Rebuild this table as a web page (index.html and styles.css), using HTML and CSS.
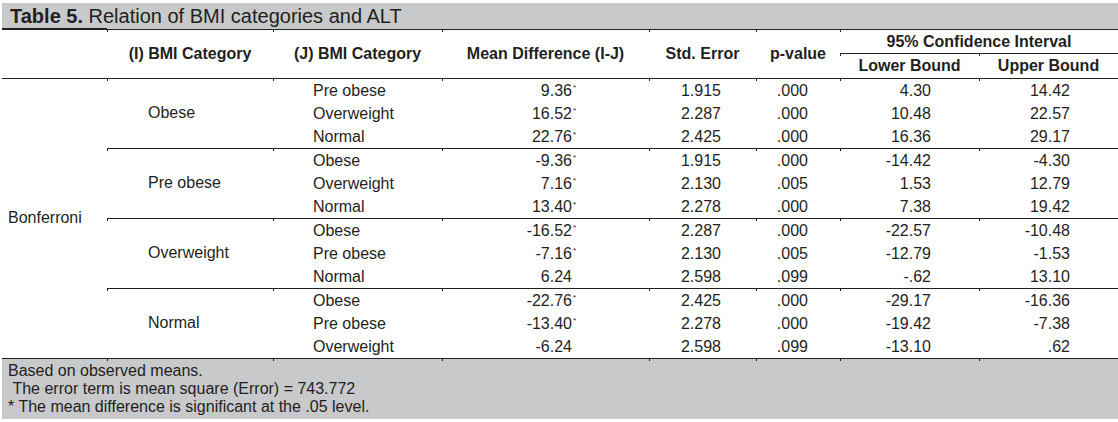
FILE: index.html
```html
<!DOCTYPE html>
<html lang="en">
<head>
<meta charset="utf-8">
<title>Table 5. Relation of BMI categories and ALT</title>
<link rel="stylesheet" href="styles.css">
</head>
<body>
<div class="sheet">
  <div class="title"><b>Table 5.</b> Relation of BMI categories and ALT</div>
  <div class="grid">
    <div class="h span2r end"></div>
    <div class="h span2r end tk">(I) BMI Category</div>
    <div class="h span2r end tk">(J) BMI Category</div>
    <div class="h span2r end tk">Mean Difference (I-J)</div>
    <div class="h span2r end tk">Std. Error</div>
    <div class="h span2r end tk">p-value</div>
    <div class="h span2c end tk">95% Confidence Interval</div>
    <div class="h end tk">Lower Bound</div>
    <div class="h end tk">Upper Bound</div>

    <div class="method end">Bonferroni</div>

    <div class="gi end tk">Obese</div>
    <div class="j tk">Pre obese</div><div class="md tk">9.36<sup class="s">*</sup></div><div class="se tk">1.915</div><div class="p tk">.000</div><div class="lo tk">4.30</div><div class="up tk">14.42</div>
    <div class="j">Overweight</div><div class="md">16.52<sup class="s">*</sup></div><div class="se">2.287</div><div class="p">.000</div><div class="lo">10.48</div><div class="up">22.57</div>
    <div class="j end">Normal</div><div class="md end">22.76<sup class="s">*</sup></div><div class="se end">2.425</div><div class="p end">.000</div><div class="lo end">16.36</div><div class="up end">29.17</div>

    <div class="gi end tk">Pre obese</div>
    <div class="j tk">Obese</div><div class="md tk">-9.36<sup class="s">*</sup></div><div class="se tk">1.915</div><div class="p tk">.000</div><div class="lo tk">-14.42</div><div class="up tk">-4.30</div>
    <div class="j">Overweight</div><div class="md">7.16<sup class="s">*</sup></div><div class="se">2.130</div><div class="p">.005</div><div class="lo">1.53</div><div class="up">12.79</div>
    <div class="j end">Normal</div><div class="md end">13.40<sup class="s">*</sup></div><div class="se end">2.278</div><div class="p end">.000</div><div class="lo end">7.38</div><div class="up end">19.42</div>

    <div class="gi end tk">Overweight</div>
    <div class="j tk">Obese</div><div class="md tk">-16.52<sup class="s">*</sup></div><div class="se tk">2.287</div><div class="p tk">.000</div><div class="lo tk">-22.57</div><div class="up tk">-10.48</div>
    <div class="j">Pre obese</div><div class="md">-7.16<sup class="s">*</sup></div><div class="se">2.130</div><div class="p">.005</div><div class="lo">-12.79</div><div class="up">-1.53</div>
    <div class="j end">Normal</div><div class="md end">6.24<sup class="s"></sup></div><div class="se end">2.598</div><div class="p end">.099</div><div class="lo end">-.62</div><div class="up end">13.10</div>

    <div class="gi end tk">Normal</div>
    <div class="j tk">Obese</div><div class="md tk">-22.76<sup class="s">*</sup></div><div class="se tk">2.425</div><div class="p tk">.000</div><div class="lo tk">-29.17</div><div class="up tk">-16.36</div>
    <div class="j">Pre obese</div><div class="md">-13.40<sup class="s">*</sup></div><div class="se">2.278</div><div class="p">.000</div><div class="lo">-19.42</div><div class="up">-7.38</div>
    <div class="j end">Overweight</div><div class="md end">-6.24<sup class="s"></sup></div><div class="se end">2.598</div><div class="p end">.099</div><div class="lo end">-13.10</div><div class="up end">.62</div>
  </div>
  <div class="foot">
    <div>Based on observed means.</div>
    <div>&nbsp;The error term is mean square (Error) = 743.772</div>
    <div>* The mean difference is significant at the .05 level.</div>
  </div>
</div>
</body>
</html>
```

FILE: styles.css
```css
* { box-sizing: border-box; }

html, body {
  margin: 0;
  padding: 0;
  background: #ffffff;
}

body {
  font-family: "Liberation Sans", Arial, sans-serif;
  font-size: 16px;
  color: #231f20;
}

.sheet {
  width: 1116px;
  margin: 3px 0 0 2px;
}

.title {
  height: 27px;
  padding-left: 8px;
  font-size: 20px;
  line-height: 26px;
  background: linear-gradient(#231f20, #231f20) left bottom / 105px 1px no-repeat, #c8c9cb;
  border-bottom: 1px solid #231f20;
}

.title b { font-weight: bold; }

.grid {
  display: grid;
  grid-template-columns: 105px 166px 169px 207px 107px 84px 139px 139px;
  grid-template-rows: 24px 25px repeat(12, 23.333px);
}

.grid > div {
  display: flex;
  align-items: center;
  white-space: nowrap;
}

.end { border-bottom: 1px solid #231f20; }

.tk {
  background: linear-gradient(#231f20, #231f20) 0 0 / 1px 2px no-repeat;
}

.h {
  font-weight: bold;
  justify-content: center;
}

.span2r { grid-row: span 2; }
.span2c { grid-column: span 2; }

.method {
  grid-row: span 12;
  padding-left: 6px;
}

.gi {
  grid-row: span 3;
  padding-left: 41px;
}

.j { padding-left: 40px; }

.md, .se, .p, .lo, .up { justify-content: flex-end; }

.md { padding-right: 72px; }
.se { padding-right: 35px; }
.p { padding-right: 32px; }
.lo { padding-right: 48px; }
.up { padding-right: 48px; }

.s {
  display: inline-block;
  width: 5px;
  padding-left: 1px;
  font-size: 8px;
  line-height: 8px;
  align-self: flex-start;
  margin-top: 5px;
}

.foot {
  height: 60px;
  padding: 3px 6px 0;
  font-size: 16px;
  line-height: 18px;
  background:
    linear-gradient(#231f20, #231f20) 105px 0 / 1px 2px no-repeat,
    linear-gradient(#231f20, #231f20) 271px 0 / 1px 2px no-repeat,
    linear-gradient(#231f20, #231f20) 440px 0 / 1px 2px no-repeat,
    linear-gradient(#231f20, #231f20) 647px 0 / 1px 2px no-repeat,
    linear-gradient(#231f20, #231f20) 754px 0 / 1px 2px no-repeat,
    linear-gradient(#231f20, #231f20) 838px 0 / 1px 2px no-repeat,
    linear-gradient(#231f20, #231f20) 977px 0 / 1px 2px no-repeat,
    #c8c9cb;
}
```
